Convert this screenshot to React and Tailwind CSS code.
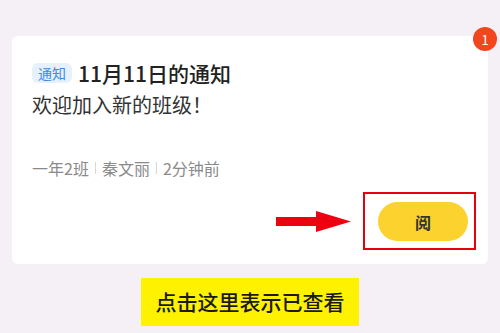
import React from "react";

export default function App() {
  const font = { fontFamily: '"Noto Sans CJK SC", "Noto Sans", sans-serif' };
  return (
    <div
      className="w-[500px] h-[333px] bg-[#f4f0f5] pt-[36px] px-[12px] flex flex-col items-center"
      style={font}
    >
      <div className="relative w-[476px] h-[228px] bg-white rounded-[6px] pt-[24px] pl-[20px] flex flex-col">
        <div className="absolute right-[-9px] top-[-9px] w-[24px] h-[24px] rounded-full bg-[#f2461f] flex items-center justify-center text-white text-[13px] leading-none">
          1
        </div>
        <div className="flex items-center h-[26px]">
          <span className="h-[20px] w-[40px] rounded-[6px] bg-[#e6f1fd] text-[#3d8be6] text-[14px] leading-[20px] flex items-center justify-center">
            通知
          </span>
          <span className="ml-[6px] text-[21px] font-medium text-[#222] leading-[26px]">
            11月11日的通知
          </span>
        </div>
        <div className="mt-[6px] text-[20px] leading-[26px] text-[#333]">
          欢迎加入新的班级！
        </div>
        <div className="mt-[40px] flex items-center text-[16px] leading-[20px] text-[#8a8a8a]">
          <span>一年2班</span>
          <span className="mx-[6px] w-px h-[12px] bg-[#d8d8d8]" />
          <span>秦文丽</span>
          <span className="mx-[6px] w-px h-[12px] bg-[#d8d8d8]" />
          <span>2分钟前</span>
        </div>
        <div className="mt-[14px] flex items-center justify-end pr-[12px]">
          <svg width="75" height="21" viewBox="0 0 75 21" className="mr-[12px]">
            <rect x="0" y="6" width="42" height="9" fill="#ee0010" />
            <polygon points="40,0 75,10.5 40,21" fill="#ee0010" />
          </svg>
          <div className="border-2 border-[#e3000f] pl-[13px] pt-[8px] pr-[6px] pb-[7px]">
            <div className="w-[90px] h-[39px] rounded-full bg-[#fcd22e] flex items-center justify-center text-[16px] font-bold text-[#333]">
              阅
            </div>
          </div>
        </div>
      </div>
      <div className="mt-[14px] w-[218px] h-[48px] bg-[#fef200] flex items-center justify-center text-[21px] font-medium text-[#1a1a1a]">
        点击这里表示已查看
      </div>
    </div>
  );
}
